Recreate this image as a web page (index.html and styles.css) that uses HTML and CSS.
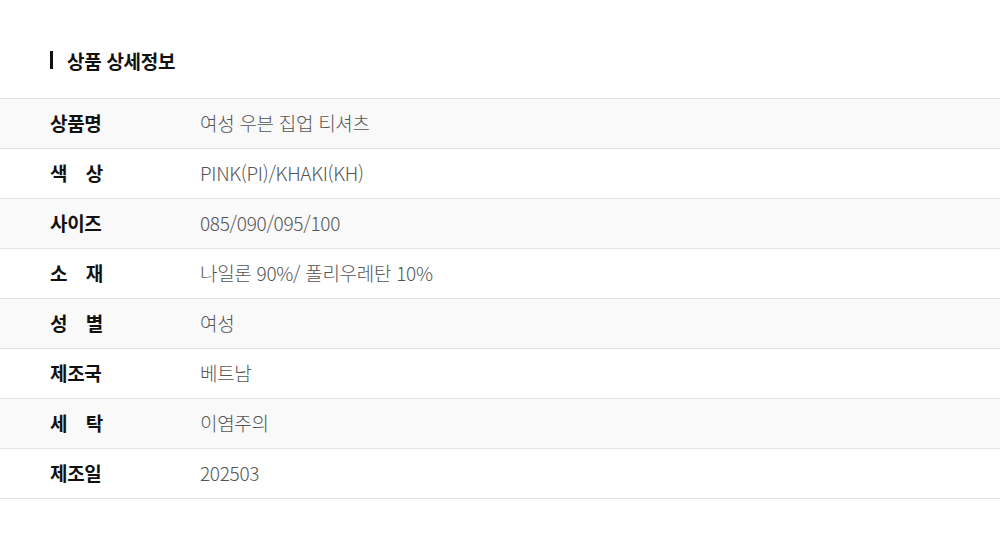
FILE: index.html
```html
<!DOCTYPE html>
<html lang="ko">
<head>
    <meta charset="UTF-8">
    <meta name="viewport" content="width=device-width, initial-scale=1.0">
    <title>상품 상세정보</title>
    <link rel="stylesheet" href="styles.css">
</head>
<body>
    <div class="detail-wrap">
        <h2 class="detail-title">상품 상세정보</h2>
        <div class="detail-table">
            <div class="detail-row">
                <div class="detail-label">상품명</div>
                <div class="detail-value">여성 우븐 집업 티셔츠</div>
            </div>
            <div class="detail-row">
                <div class="detail-label">색 상</div>
                <div class="detail-value">PINK(PI)/KHAKI(KH)</div>
            </div>
            <div class="detail-row">
                <div class="detail-label">사이즈</div>
                <div class="detail-value">085/090/095/100</div>
            </div>
            <div class="detail-row">
                <div class="detail-label">소 재</div>
                <div class="detail-value">나일론 90%/ 폴리우레탄 10%</div>
            </div>
            <div class="detail-row">
                <div class="detail-label">성 별</div>
                <div class="detail-value">여성</div>
            </div>
            <div class="detail-row">
                <div class="detail-label">제조국</div>
                <div class="detail-value">베트남</div>
            </div>
            <div class="detail-row">
                <div class="detail-label">세 탁</div>
                <div class="detail-value">이염주의</div>
            </div>
            <div class="detail-row">
                <div class="detail-label">제조일</div>
                <div class="detail-value">202503</div>
            </div>
        </div>
    </div>
</body>
</html>
```

FILE: styles.css
```css
:root {
  --text-dark: #111111;
  --text-value: #555555;
  --line: #e2e2e2;
  --row-alt: #f9f9f9;
}

body {
  margin: 0;
  background: #ffffff;
  font-family: "Noto Sans CJK KR", "Noto Sans", sans-serif;
  color: var(--text-dark);
}

.detail-wrap {
  padding-top: 50px;
}

.detail-title {
  display: flex;
  align-items: center;
  gap: 14px;
  margin: 0 0 28px 50px;
  height: 20px;
  font-size: 19px;
  font-weight: 700;
  letter-spacing: -0.3px;
}

.detail-title::before {
  content: "";
  width: 3px;
  height: 18px;
  background: var(--text-dark);
}

.detail-table {
  border-top: 1px solid var(--line);
}

.detail-row {
  display: flex;
  align-items: center;
  box-sizing: border-box;
  height: 50px;
  padding: 0 0 3px 50px;
  border-bottom: 1px solid var(--line);
}

.detail-row:nth-child(odd) {
  background: var(--row-alt);
}

.detail-label {
  width: 53px;
  margin-right: 97px;
  font-size: 19px;
  font-weight: 700;
  text-align: justify;
  text-align-last: justify;
  letter-spacing: -0.3px;
}

.detail-value {
  font-size: 19px;
  font-weight: 300;
  color: var(--text-value);
  letter-spacing: -0.3px;
}
```
